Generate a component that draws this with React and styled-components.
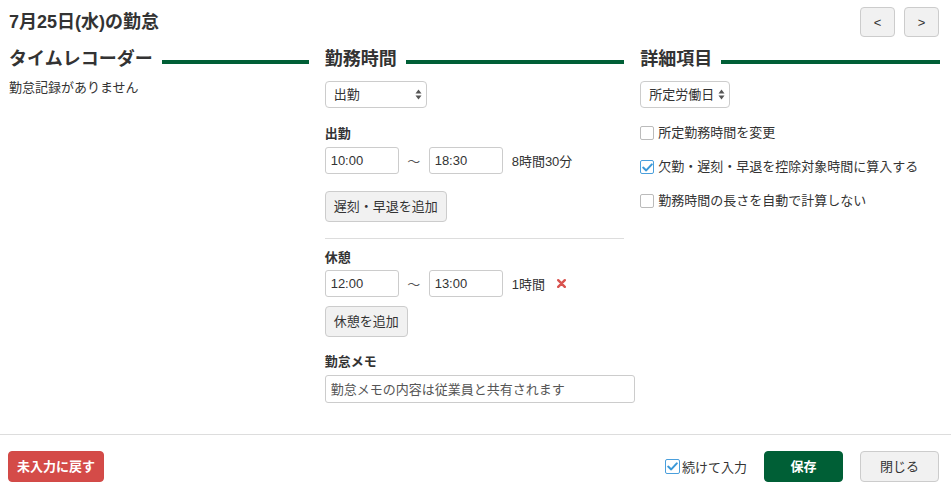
import React from 'react';
import styled, { createGlobalStyle } from 'styled-components';

const GlobalStyle = createGlobalStyle`
  html, body {
    margin: 0;
    padding: 0;
    background: #fff;
  }
  body {
    font-family: "Liberation Sans", "Noto Sans CJK JP", sans-serif;
    font-size: 13px;
    color: #333;
  }
  * {
    box-sizing: border-box;
  }
`;

const GREEN = '#005f36';

const S = {
  Page: styled.div`
    display: flex;
    flex-direction: column;
    width: 951px;
    height: 495px;
  `,
  Top: styled.header`
    display: flex;
    justify-content: space-between;
    align-items: flex-start;
    padding: 7px 12px 0 9px;
  `,
  Title: styled.h1`
    margin: 4px 0 0;
    font-size: 18px;
    line-height: 22px;
    font-weight: 700;
    color: #333;
  `,
  Nav: styled.div`
    display: flex;
    gap: 9px;
  `,
  Button: styled.button`
    display: inline-flex;
    justify-content: center;
    align-items: center;
    height: ${({ $h }) => $h || 31}px;
    width: ${({ $w }) => ($w ? `${$w}px` : 'auto')};
    padding: 0 8px;
    border: 1px solid ${({ $variant }) =>
      $variant === 'danger' ? '#d24a47' : $variant === 'primary' ? GREEN : '#ccc'};
    border-radius: 4px;
    background: ${({ $variant }) =>
      $variant === 'danger' ? '#d44b48' : $variant === 'primary' ? GREEN : '#f1f1f1'};
    color: ${({ $variant }) => ($variant ? '#fff' : '#333')};
    font-family: inherit;
    font-size: 13px;
    font-weight: ${({ $variant }) => ($variant ? 700 : 400)};
    line-height: 1;
    cursor: pointer;
  `,
  Main: styled.main`
    flex: 1;
    display: grid;
    grid-template-columns: repeat(3, minmax(0, 1fr));
    column-gap: 16px;
    align-items: start;
    padding: 12px 11px 0 9px;
  `,
  Column: styled.section`
    display: flex;
    flex-direction: column;
    min-width: 0;
  `,
  Heading: styled.div`
    display: flex;
    align-items: center;
    height: 20px;
  `,
  HeadingText: styled.h2`
    margin: 0;
    font-size: 18px;
    line-height: 20px;
    font-weight: 700;
    color: #333;
    white-space: nowrap;
  `,
  HeadingLine: styled.span`
    flex: 1;
    height: 4px;
    margin: 6px 0 0 9px;
    background: ${GREEN};
  `,
  Empty: styled.p`
    margin: 10px 0 0;
    line-height: 18px;
  `,
  SelectBox: styled.div`
    position: relative;
    display: inline-flex;
    align-self: flex-start;
    margin-top: ${({ $mt }) => $mt || 0}px;
  `,
  Select: styled.select`
    appearance: none;
    height: 27px;
    width: ${({ $w }) => $w}px;
    padding: 0 14px 0 8px;
    border: 1px solid #ccc;
    border-radius: 4px;
    background: #fff;
    color: #333;
    font-family: inherit;
    font-size: 13px;
  `,
  Arrows: styled.svg`
    position: absolute;
    right: 5px;
    top: 8px;
    pointer-events: none;
  `,
  Label: styled.div`
    margin-top: ${({ $mt }) => $mt}px;
    font-weight: 700;
    line-height: 18px;
  `,
  TimeRow: styled.div`
    display: flex;
    align-items: center;
    margin-top: ${({ $mt }) => $mt}px;
  `,
  TimeInput: styled.input`
    width: 74px;
    height: 27px;
    padding: 0 5px;
    border: 1px solid #ccc;
    border-radius: 3px;
    color: #333;
    font-family: inherit;
    font-size: 13px;
  `,
  Tilde: styled.span`
    width: 30px;
    text-align: center;
    color: #555;
  `,
  Duration: styled.span`
    margin-left: 9px;
  `,
  Remove: styled.svg`
    margin-left: 12px;
    cursor: pointer;
  `,
  ButtonWrap: styled.div`
    margin-top: ${({ $mt }) => $mt}px;
  `,
  Divider: styled.hr`
    width: 100%;
    margin: 16px 0 0;
    border: 0;
    border-top: 1px solid #ddd;
  `,
  Memo: styled.input`
    width: 310px;
    height: 28px;
    margin-top: 4px;
    padding: 0 5px;
    border: 1px solid #ccc;
    border-radius: 3px;
    font-family: inherit;
    font-size: 13px;
    color: #333;
    &::placeholder {
      color: #555;
    }
  `,
  Checks: styled.div`
    display: flex;
    flex-direction: column;
    gap: 14px;
    margin-top: 15px;
  `,
  CheckLabel: styled.label`
    display: flex;
    align-items: center;
    gap: 4px;
    height: 20px;
    line-height: 20px;
    cursor: pointer;
  `,
  Box: styled.span`
    display: inline-flex;
    justify-content: center;
    align-items: center;
    width: ${({ $size }) => $size || 14}px;
    height: ${({ $size }) => $size || 14}px;
    border: 1px solid ${({ $checked }) => ($checked ? '#4a9fdc' : '#bbb')};
    border-radius: 2px;
    background: #fff;
    flex-shrink: 0;
  `,
  Footer: styled.footer`
    display: flex;
    align-items: flex-start;
    height: 61px;
    padding: 16px 12px 0 8px;
    border-top: 1px solid #ddd;
  `,
  FooterRight: styled.div`
    display: flex;
    align-items: center;
    gap: 17px;
    margin-left: auto;
  `,
  Continue: styled.label`
    display: flex;
    align-items: center;
    gap: 2px;
    cursor: pointer;
  `,
};

const Check = ({ checked, size }) => (
  <S.Box $checked={checked} $size={size}>
    {checked && (
      <svg width="11" height="9" viewBox="0 0 11 9">
        <path d="M1.2 4.6 L4.2 7.4 L9.8 1.4" fill="none" stroke="#3a98d8" strokeWidth="2" strokeLinecap="round" strokeLinejoin="round" />
      </svg>
    )}
  </S.Box>
);

const SelectField = ({ value, options, width, mt }) => (
  <S.SelectBox $mt={mt}>
    <S.Select $w={width} defaultValue={value}>
      {options.map(o => (
        <option key={o}>{o}</option>
      ))}
    </S.Select>
    <S.Arrows width="7" height="11" viewBox="0 0 7 11">
      <path d="M3.5 0.5 L6.5 4.5 L0.5 4.5 Z" fill="#555" />
      <path d="M3.5 10.5 L6.5 6.5 L0.5 6.5 Z" fill="#555" />
    </S.Arrows>
  </S.SelectBox>
);

const Heading = ({ children }) => (
  <S.Heading>
    <S.HeadingText>{children}</S.HeadingText>
    <S.HeadingLine />
  </S.Heading>
);

const App = () => (
  <>
    <GlobalStyle />
    <S.Page>
      <S.Top>
        <S.Title>7月25日(水)の勤怠</S.Title>
        <S.Nav>
          <S.Button $w={35} $h={30}>&lt;</S.Button>
          <S.Button $w={35} $h={30}>&gt;</S.Button>
        </S.Nav>
      </S.Top>

      <S.Main>
        <S.Column>
          <Heading>タイムレコーダー</Heading>
          <S.Empty>勤怠記録がありません</S.Empty>
        </S.Column>

        <S.Column>
          <Heading>勤務時間</Heading>
          <SelectField value="出勤" options={['出勤', '欠勤', '休日']} width={102} mt={12} />

          <S.Label $mt={17}>出勤</S.Label>
          <S.TimeRow $mt={4}>
            <S.TimeInput defaultValue="10:00" />
            <S.Tilde>〜</S.Tilde>
            <S.TimeInput defaultValue="18:30" />
            <S.Duration>8時間30分</S.Duration>
          </S.TimeRow>
          <S.ButtonWrap $mt={17}>
            <S.Button>遅刻・早退を追加</S.Button>
          </S.ButtonWrap>

          <S.Divider />

          <S.Label $mt={10}>休憩</S.Label>
          <S.TimeRow $mt={3}>
            <S.TimeInput defaultValue="12:00" />
            <S.Tilde>〜</S.Tilde>
            <S.TimeInput defaultValue="13:00" />
            <S.Duration>1時間</S.Duration>
            <S.Remove width="9" height="9" viewBox="0 0 9 9">
              <path d="M1.2 1.2 L7.8 7.8 M7.8 1.2 L1.2 7.8" stroke="#d9534f" strokeWidth="2.4" strokeLinecap="round" />
            </S.Remove>
          </S.TimeRow>
          <S.ButtonWrap $mt={9}>
            <S.Button>休憩を追加</S.Button>
          </S.ButtonWrap>

          <S.Label $mt={16}>勤怠メモ</S.Label>
          <S.Memo placeholder="勤怠メモの内容は従業員と共有されます" />
        </S.Column>

        <S.Column>
          <Heading>詳細項目</Heading>
          <SelectField value="所定労働日" options={['所定労働日', '所定休日', '法定休日']} width={90} mt={12} />
          <S.Checks>
            <S.CheckLabel>
              <Check />
              所定勤務時間を変更
            </S.CheckLabel>
            <S.CheckLabel>
              <Check checked />
              欠勤・遅刻・早退を控除対象時間に算入する
            </S.CheckLabel>
            <S.CheckLabel>
              <Check />
              勤務時間の長さを自動で計算しない
            </S.CheckLabel>
          </S.Checks>
        </S.Column>
      </S.Main>

      <S.Footer>
        <S.Button $variant="danger">未入力に戻す</S.Button>
        <S.FooterRight>
          <S.Continue>
            <Check checked size={15} />
            続けて入力
          </S.Continue>
          <S.Button $variant="primary" $w={79}>保存</S.Button>
          <S.Button $w={79}>閉じる</S.Button>
        </S.FooterRight>
      </S.Footer>
    </S.Page>
  </>
);

export default App;
